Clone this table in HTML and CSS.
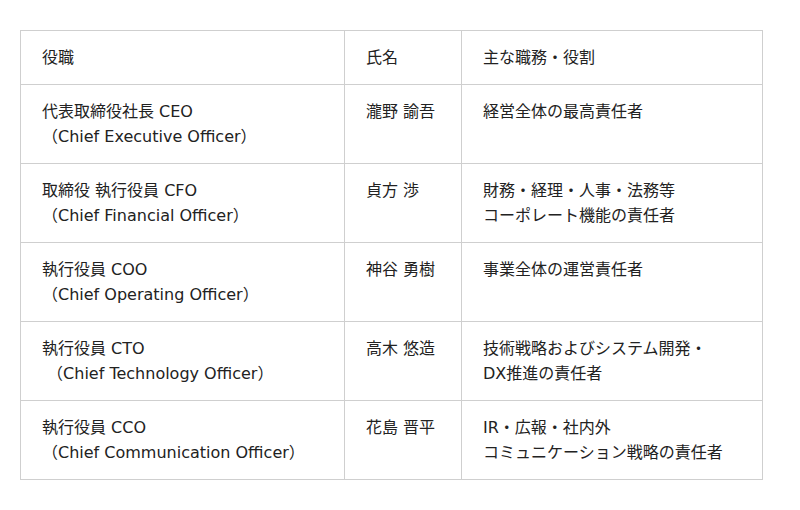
FILE: index.html
```html
<!DOCTYPE html>
<html lang="ja">
<head>
<meta charset="utf-8">
<link rel="stylesheet" href="styles.css">
</head>
<body>
<div class="wrap">
<table class="officers">
  <colgroup>
    <col class="c1"><col class="c2"><col class="c3">
  </colgroup>
  <thead>
    <tr><th>役職</th><th>氏名</th><th>主な職務・役割</th></tr>
  </thead>
  <tbody>
    <tr><td>代表取締役社長 CEO<br>（Chief Executive Officer）</td><td>瀧野 諭吾</td><td>経営全体の最高責任者</td></tr>
    <tr><td>取締役 執行役員 CFO<br>（Chief Financial Officer）</td><td>貞方 渉</td><td>財務・経理・人事・法務等<br>コーポレート機能の責任者</td></tr>
    <tr><td>執行役員 COO<br>（Chief Operating Officer）</td><td>神谷 勇樹</td><td>事業全体の運営責任者</td></tr>
    <tr><td>執行役員 CTO<br>&nbsp;（Chief Technology Officer）</td><td>高木 悠造</td><td>技術戦略およびシステム開発・<br>DX推進の責任者</td></tr>
    <tr><td>執行役員 CCO<br>（Chief Communication Officer）</td><td>花島 晋平</td><td>IR・広報・社内外<br>コミュニケーション戦略の責任者</td></tr>
  </tbody>
</table>
</div>
</body>
</html>
```

FILE: styles.css
```css
html, body { margin: 0; background: #fff; }
.wrap { padding: 30px 20px; }
.officers {
  width: 742px;
  border-collapse: collapse;
  table-layout: fixed;
  font-family: "DejaVu Sans", "Noto Sans CJK JP", sans-serif;
  font-size: 16px;
  line-height: 25px;
  color: #222;
}
.c1 { width: 324px; }
.c2 { width: 117px; }
.c3 { width: 301px; }
.officers th, .officers td {
  border: 1px solid #cfcfcf;
  padding: 14px 21px;
  text-align: left;
  vertical-align: top;
  font-weight: normal;
}
```
